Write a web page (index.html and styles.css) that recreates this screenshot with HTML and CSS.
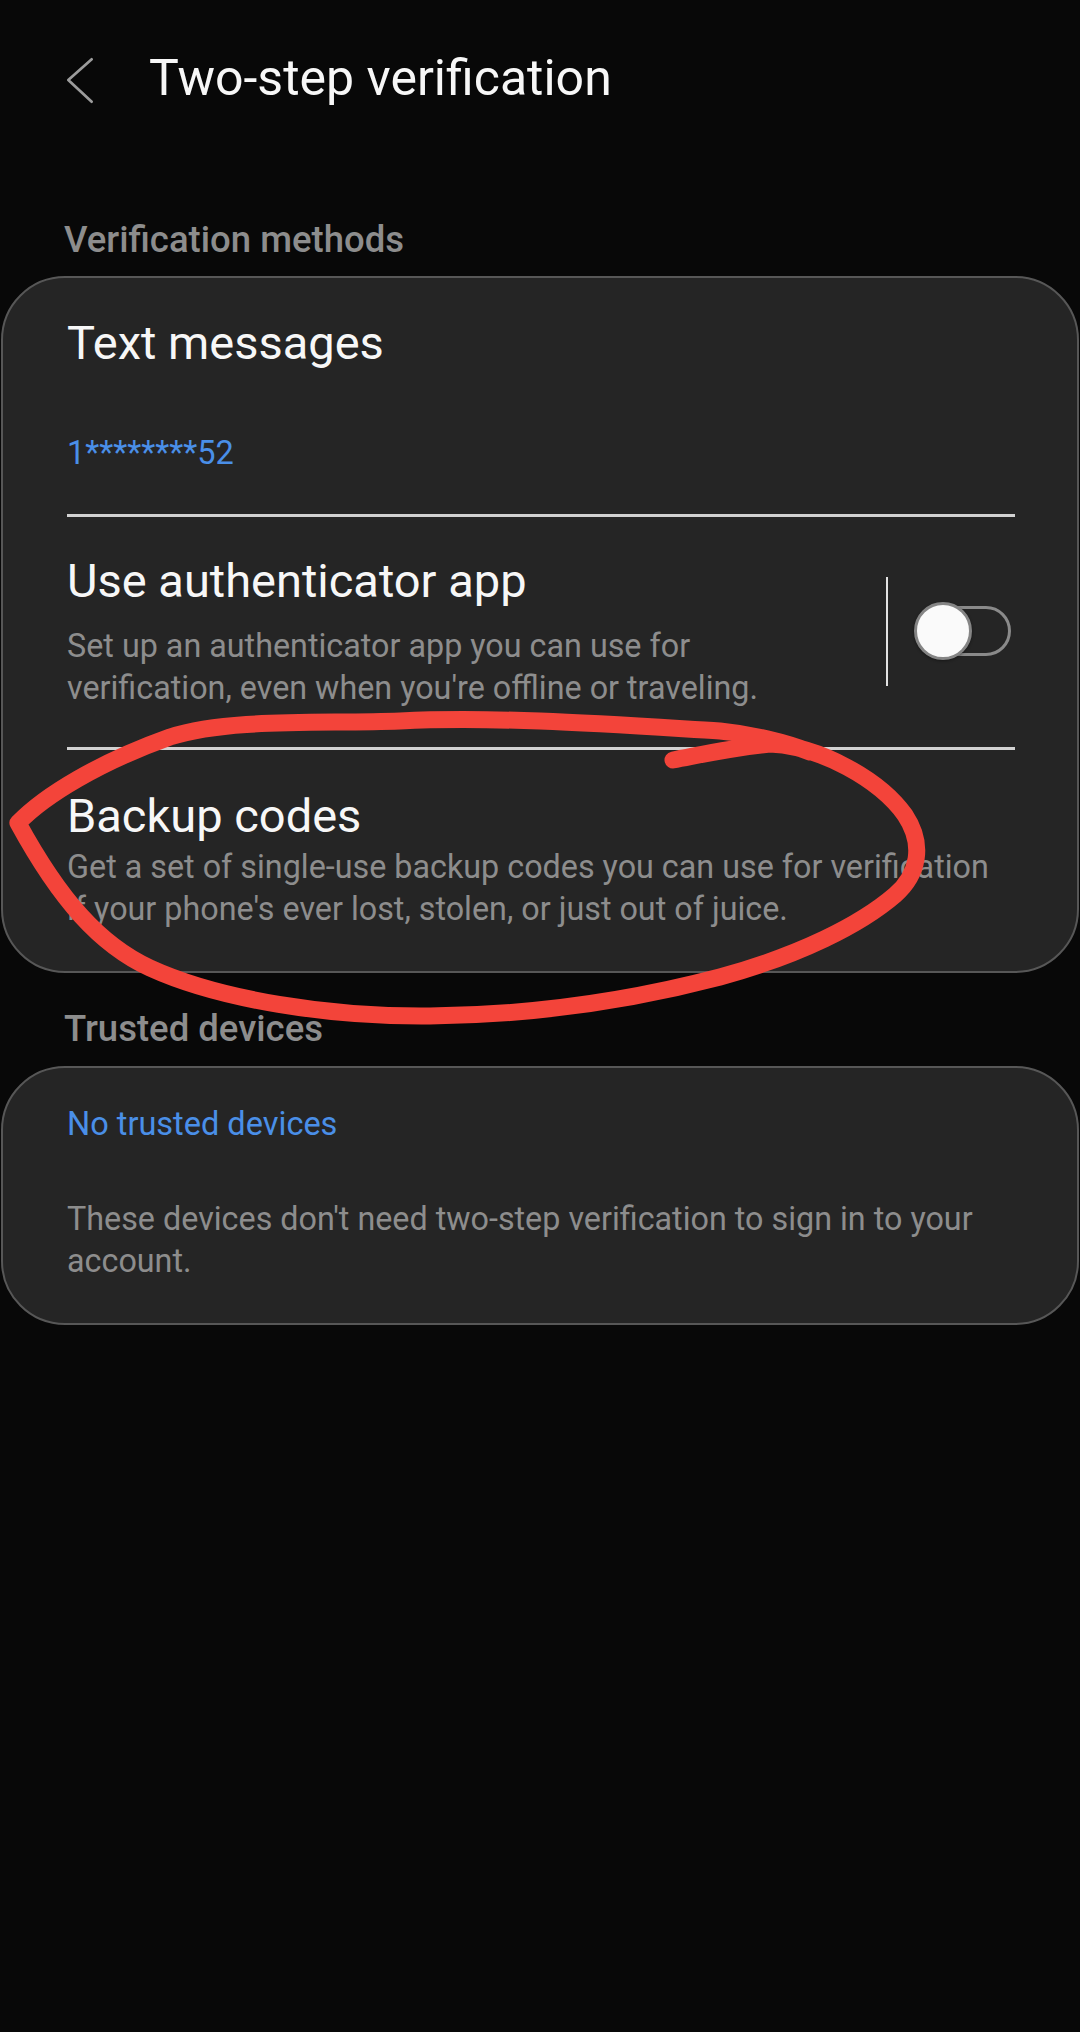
FILE: index.html
```html
<!DOCTYPE html>
<html lang="en">
<head>
    <meta charset="UTF-8">
    <meta name="viewport" content="width=device-width, initial-scale=1.0">
    <title>Two-step verification</title>
    <link rel="stylesheet" href="styles.css">
</head>
<body>
    <div class="screen">
        <header class="app-bar">
            <svg class="back" width="40" height="60" viewBox="0 0 40 60">
                <path d="M31.7 11.3 L8.3 32 L31.7 53.7" fill="none" stroke="#9c9c9c" stroke-width="2.7" stroke-linecap="round" stroke-linejoin="round"/>
            </svg>
            <h1 class="app-title">Two-step verification</h1>
        </header>

        <h2 class="section-label first">Verification methods</h2>
        <section class="card">
            <div class="item item-sms">
                <div class="item-title">Text messages</div>
                <div class="item-link">1********52</div>
            </div>
            <div class="divider"></div>
            <div class="item item-switch">
                <div class="item-text">
                    <div class="item-title">Use authenticator app</div>
                    <div class="item-desc">Set up an authenticator app you can use for<br>verification, even when you're offline or traveling.</div>
                </div>
                <div class="v-divider"></div>
                <div class="switch">
                    <span class="track"></span>
                    <span class="knob"></span>
                </div>
            </div>
            <div class="divider"></div>
            <div class="item item-backup">
                <div class="item-title">Backup codes</div>
                <div class="item-desc">Get a set of single-use backup codes you can use for verification<br>if your phone's ever lost, stolen, or just out of juice.</div>
            </div>
        </section>

        <h2 class="section-label">Trusted devices</h2>
        <section class="card">
            <div class="item item-trusted">
                <div class="item-link">No trusted devices</div>
                <div class="item-desc">These devices don't need two-step verification to sign in to your<br>account.</div>
            </div>
        </section>

        <!-- red marker scribble on top of the screenshot -->
        <svg class="scribble" width="1080" height="1100" viewBox="0 0 1080 1100">
            <path d="M673 760
                     C700 755, 730 748, 770 744
                     C820 746, 880 780, 905 815
                     C925 845, 918 875, 895 895
                     C860 925, 800 955, 720 977
                     C640 998, 540 1015, 430 1016
                     C330 1017, 220 1000, 150 968
                     C100 945, 60 900, 18 823
                     C45 795, 100 762, 170 737
                     C230 718, 320 724, 400 721
                     C500 716, 620 725, 720 731
                     C750 734, 785 742, 810 752"
                  fill="none" stroke="#f3443a" stroke-width="17" stroke-linecap="round" stroke-linejoin="round"/>
        </svg>
    </div>
</body>
</html>
```

FILE: styles.css
```css
:root {
    --bg: #080808;
    --card-bg: #252525;
    --card-border: #575757;
    --text: #f7f7f7;
    --muted: #8d8d8d;
    --link: #4a8fe8;
    --line: #d2d2d2;
}

* {
    box-sizing: border-box;
    margin: 0;
    padding: 0;
}

body {
    background: var(--bg);
    font-family: 'Roboto', 'Noto Sans', sans-serif;
    color: var(--text);
    width: 1080px;
    min-height: 2032px;
}

.screen {
    position: relative;
    min-height: 2032px;
    padding-top: 48px;
}

/* top bar */
.app-bar {
    display: flex;
    align-items: center;
    height: 60px;
}

.back {
    display: block;
    margin-left: 60px;
    margin-right: 49px;
}

.app-title {
    font-size: 50px;
    font-weight: 400;
    line-height: 60px;
    color: var(--text);
}

/* section headers */
.section-label {
    font-size: 36.5px;
    font-weight: 500;
    line-height: 42px;
    color: var(--muted);
    padding-left: 64px;
    margin-top: 35px;
    margin-bottom: 16px;
}

.section-label.first {
    margin-top: 111px;
    margin-bottom: 15px;
}

/* cards */
.card {
    margin: 0 1px;
    background: var(--card-bg);
    border: 2px solid var(--card-border);
    border-radius: 64px;
    padding: 0 62px 0 64px;
}

.item-title {
    font-size: 47px;
    line-height: 56px;
    color: var(--text);
}

.item-link {
    font-size: 32.5px;
    line-height: 42px;
    color: var(--link);
}

.item-desc {
    font-size: 32.3px;
    line-height: 42px;
    color: var(--muted);
}

.divider {
    height: 3px;
    background: var(--line);
}

.item-sms {
    padding: 37px 0 40px;
}

.item-sms .item-link {
    margin-top: 61px;
}

.item-switch {
    display: flex;
    align-items: center;
    padding: 36px 0 38px;
}

.item-switch .item-text {
    flex: 1;
}

.item-switch .item-desc {
    margin-top: 16px;
}

.v-divider {
    width: 2px;
    height: 109px;
    background: #e2e2e2;
    margin-right: 26px;
}

.switch {
    position: relative;
    width: 97px;
    height: 58px;
    margin-right: 4px;
}

.switch .track {
    position: absolute;
    right: 0;
    top: 4px;
    width: 89px;
    height: 50px;
    border: 3px solid #8a8a8a;
    border-radius: 25px;
}

.switch .knob {
    position: absolute;
    left: 0;
    top: 0;
    width: 58px;
    height: 58px;
    border-radius: 50%;
    background: #fafafa;
    border: 3px solid #858585;
    box-shadow: 0 1px 3px rgba(0, 0, 0, 0.4);
}

.item-backup {
    padding: 38px 0 41px;
}

.item-backup .item-desc {
    margin-top: 2px;
}

.item-trusted {
    padding: 35px 0 41px;
}

.item-trusted .item-desc {
    margin-top: 53px;
}

/* marker annotation over the page */
.scribble {
    position: absolute;
    left: 0;
    top: 0;
    pointer-events: none;
}
```
